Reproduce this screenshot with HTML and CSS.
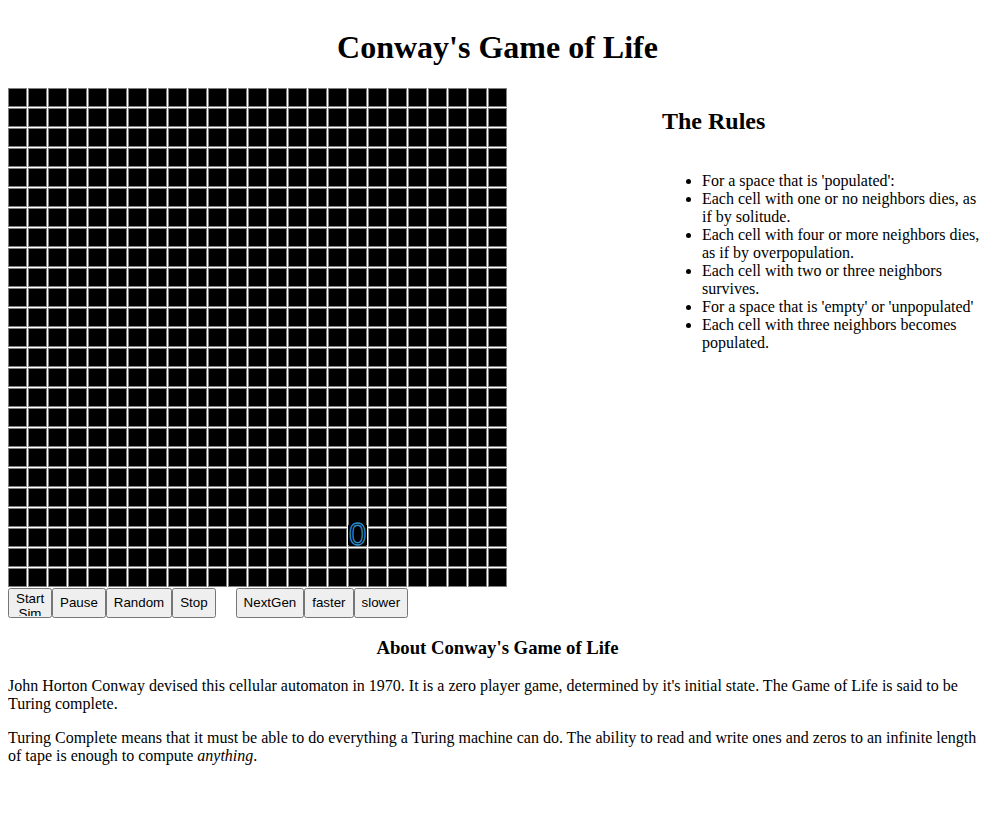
FILE: index.html
```
<!DOCTYPE html>
<html lang="en">
<head>
<meta charset="utf-8">
<title>Conway's Game of Life</title>
<link rel="stylesheet" href="styles.css">
</head>
<body>
<h1 class="title">Conway's Game of Life</h1>
<div class="main">
  <div class="game">
    <div class="board">
      <span class="counter">0</span>
    </div>
    <div class="controls">
      <button class="btn btn-start">Start Sim</button>
      <button class="btn">Pause</button>
      <button class="btn">Random</button>
      <button class="btn">Stop</button>
      <button class="btn btn-gap">NextGen</button>
      <button class="btn">faster</button>
      <button class="btn">slower</button>
    </div>
  </div>
  <div class="rules">
    <h2 class="rules-title">The Rules</h2>
    <ul class="rules-list">
      <li>For a space that is 'populated':</li>
      <li>Each cell with one or no neighbors dies, as if by solitude.</li>
      <li>Each cell with four or more neighbors dies, as if by overpopulation.</li>
      <li>Each cell with two or three neighbors survives.</li>
      <li>For a space that is 'empty' or 'unpopulated'</li>
      <li>Each cell with three neighbors becomes populated.</li>
    </ul>
  </div>
</div>
<h3 class="about-title">About Conway's Game of Life</h3>
<p class="about-text">John Horton Conway devised this cellular automaton in 1970. It is a zero player game, determined by it's initial state. The Game of Life is said to be Turing complete.</p>
<p class="about-text">Turing Complete means that it must be able to do everything a Turing machine can do. The ability to read and write ones and zeros to an infinite length of tape is enough to compute <em>anything</em>.</p>
</body>
</html>
```
FILE: styles.css
```
body {
  margin: 8px;
  font-family: "Liberation Serif", "Times New Roman", serif;
  font-size: 16px;
  color: #000;
  background: #fff;
}

.title {
  text-align: center;
  font-size: 32px;
  margin: 21.44px 0;
}

.main {
  display: flex;
  justify-content: space-between;
  align-items: flex-start;
}

.game {
  position: relative;
  width: 500px;
}

.board {
  position: relative;
  width: 500px;
  height: 500px;
  background-color: #000;
  background-image:
    linear-gradient(to right, transparent 0 19px, #fff 19px 20px),
    linear-gradient(to bottom, transparent 0 19px, #fff 19px 20px),
    linear-gradient(to right, #808080 0 1px, transparent 1px 18px, #808080 18px 19px, transparent 19px 20px),
    linear-gradient(to bottom, #808080 0 1px, transparent 1px 18px, #808080 18px 19px, transparent 19px 20px);
  background-size: 20px 100%, 100% 20px, 20px 100%, 100% 20px;
}

.counter {
  position: absolute;
  left: 340px;
  top: 437px;
  width: 19px;
  height: 20px;
  background: #000;
  font-family: "Liberation Sans", Arial, sans-serif;
  font-size: 31px;
  line-height: 20px;
  text-align: center;
  color: #000;
  -webkit-text-stroke: 1.3px #2b8ac6;
}

.controls {
  display: flex;
  align-items: flex-start;
}

.btn {
  height: 30px;
  margin: 0;
  font-family: "Liberation Sans", Arial, sans-serif;
  font-size: 13.333px;
  overflow: hidden;
}

.btn-start {
  width: 44px;
}

.btn-gap {
  margin-left: 20px;
}

.rules {
  width: 33.2%;
}

.rules-title {
  font-size: 24px;
  margin: 19.92px 0;
}

.rules-list {
  margin: 37px 0 16px;
  padding-left: 40px;
}

.about-title {
  text-align: center;
  font-size: 18.72px;
  margin: 18.72px 0;
}

.about-text {
  margin: 16px 0;
}
```
